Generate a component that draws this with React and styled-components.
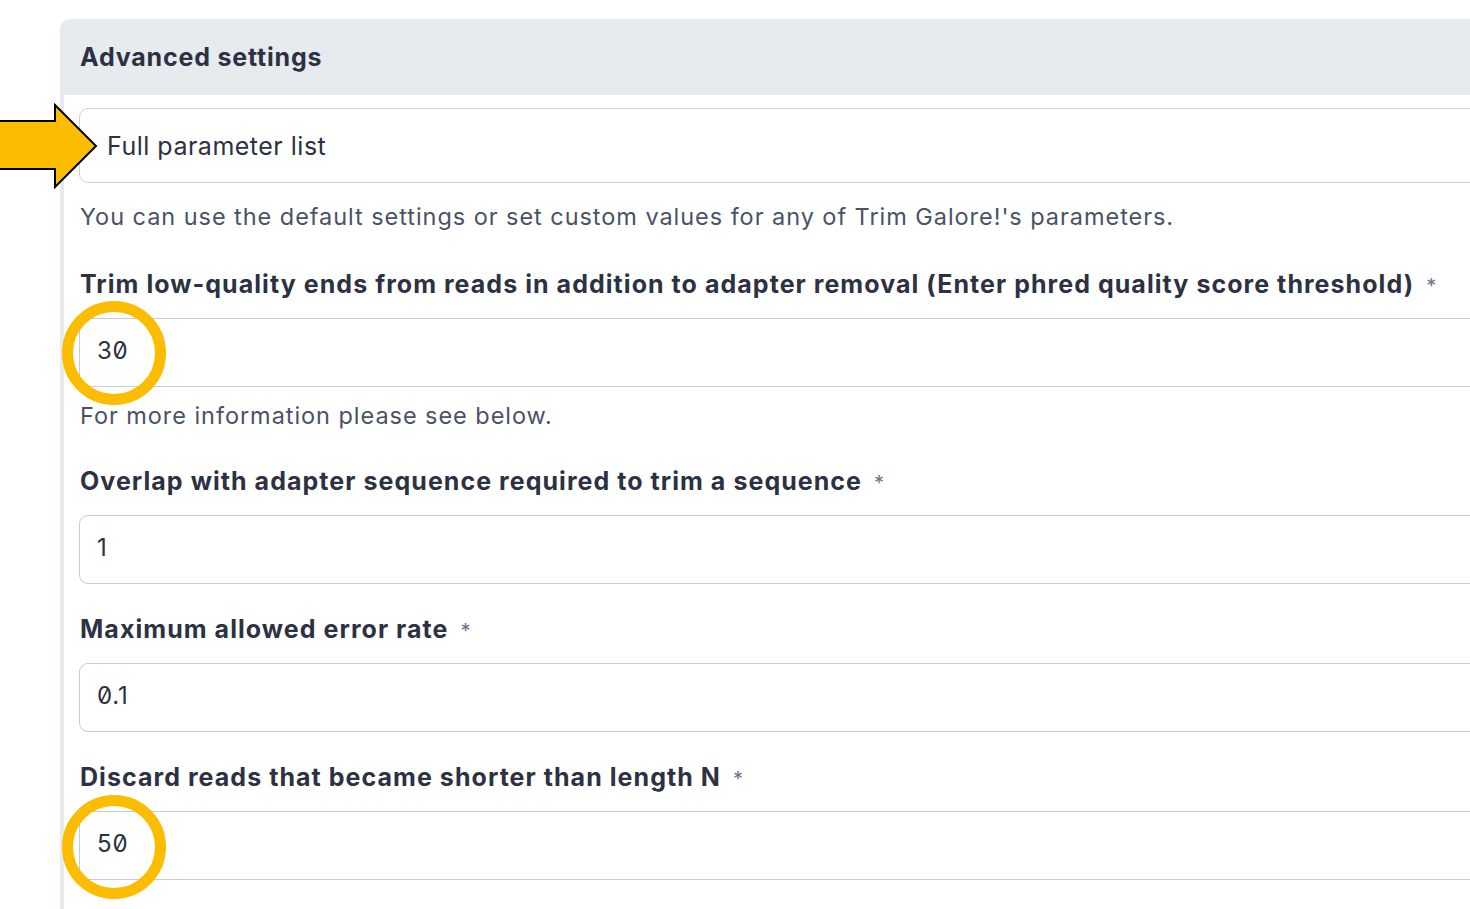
import React from "react";
import styled, { createGlobalStyle } from "styled-components";

const GlobalStyle = createGlobalStyle`
  html, body {
    margin: 0;
    padding: 0;
    background: #ffffff;
  }
  body {
    font-family: "Inter", "Open Sans", "Liberation Sans", sans-serif;
  }
`;

// whole page, the card runs out past the right edge
const Page = styled.div`
  position: relative;
  width: 1470px;
  height: 909px;
  overflow: hidden;
  padding: 19px 0 0 60px;
  box-sizing: border-box;
`;

// the settings card
const Card = styled.section`
  width: 1500px;
  min-height: 900px;
  border-left: 4px solid #e6e9ed;
  border-top-left-radius: 10px;
  box-sizing: border-box;
`;

// grey title bar
const CardHeader = styled.div`
  height: 76px;
  background: #e8ebee;
  display: flex;
  align-items: center;
  padding-left: 16px;
  font-size: 25px;
  font-weight: 700;
  letter-spacing: 0.8px;
  color: #2c3143;
  border-top-left-radius: 6px;
`;

const CardBody = styled.div`
  padding: 13px 0 0 15px;
  display: flex;
  flex-direction: column;
`;

// collapsed "Full parameter list" box
const Collapse = styled.div`
  height: 75px;
  box-sizing: border-box;
  border: 1.5px solid #cdd2da;
  border-radius: 9px;
  display: flex;
  align-items: center;
  padding-left: 27px;
  font-size: 25px;
  letter-spacing: 0.5px;
  color: #2c3143;
`;

const HelpText = styled.div`
  font-size: 23.5px;
  letter-spacing: 0.95px;
  color: #4a5266;
  line-height: 30px;
  margin-top: ${(p) => p.$top || 0}px;
  padding-left: 1px;
`;

const Field = styled.div`
  display: flex;
  flex-direction: column;
  margin-top: ${(p) => p.$top || 0}px;
`;

const Label = styled.div`
  font-size: 25px;
  font-weight: 700;
  letter-spacing: 1.05px;
  color: #2c3143;
  line-height: 34px;
  padding-left: 1px;
  display: flex;
  align-items: baseline;
  gap: 12px;
`;

const Required = styled.span`
  font-size: 20px;
  font-weight: 400;
  color: #6b7489;
`;

const Input = styled.div`
  margin-top: 15px;
  height: 69px;
  box-sizing: border-box;
  border: 1.5px solid #c6cbd4;
  border-radius: 9px;
  display: flex;
  align-items: center;
  padding-left: 17px;
  padding-bottom: 4px;
  font-size: 24px;
  letter-spacing: 0.8px;
  font-feature-settings: "zero" 1;
  color: #2c3143;
`;

// yellow annotation ring
const Ring = styled.div`
  position: absolute;
  left: 62px;
  top: ${(p) => p.$top}px;
  width: 104px;
  height: 104px;
  box-sizing: border-box;
  border: 11px solid #fcbd00;
  border-radius: 50%;
  pointer-events: none;
`;

const ArrowMark = styled.svg`
  position: absolute;
  left: 0;
  top: 103px;
`;

const fields = [
  {
    label:
      "Trim low-quality ends from reads in addition to adapter removal (Enter phred quality score threshold)",
    value: "30",
    help: "For more information please see below.",
    top: 35,
  },
  {
    label: "Overlap with adapter sequence required to trim a sequence",
    value: "1",
    top: 33,
  },
  { label: "Maximum allowed error rate", value: "0.1", top: 28 },
  {
    label: "Discard reads that became shorter than length N",
    value: "50",
    top: 28,
  },
];

const App = () => {
  return (
    <>
      <GlobalStyle />
      <Page>
        <Card>
          <CardHeader>Advanced settings</CardHeader>
          <CardBody>
            <Collapse>Full parameter list</Collapse>
            <HelpText $top={19}>
              You can use the default settings or set custom values for any of
              Trim Galore!'s parameters.
            </HelpText>
            {fields.map((f, i) => (
              <React.Fragment key={i}>
                <Field $top={f.top}>
                  <Label>
                    {f.label}
                    <Required>*</Required>
                  </Label>
                  <Input>{f.value}</Input>
                </Field>
                {f.help && <HelpText $top={14}>{f.help}</HelpText>}
              </React.Fragment>
            ))}
          </CardBody>
        </Card>

        <ArrowMark width="100" height="86" viewBox="0 0 100 86">
          <polygon
            points="-2,18 55,18 55,2 96,43 55,84 55,66 -2,66"
            fill="#fcbd00"
            stroke="#000"
            strokeWidth="2"
            strokeLinejoin="miter"
          />
        </ArrowMark>
        <Ring $top={301} />
        <Ring $top={795} />
      </Page>
    </>
  );
};

export default App;
